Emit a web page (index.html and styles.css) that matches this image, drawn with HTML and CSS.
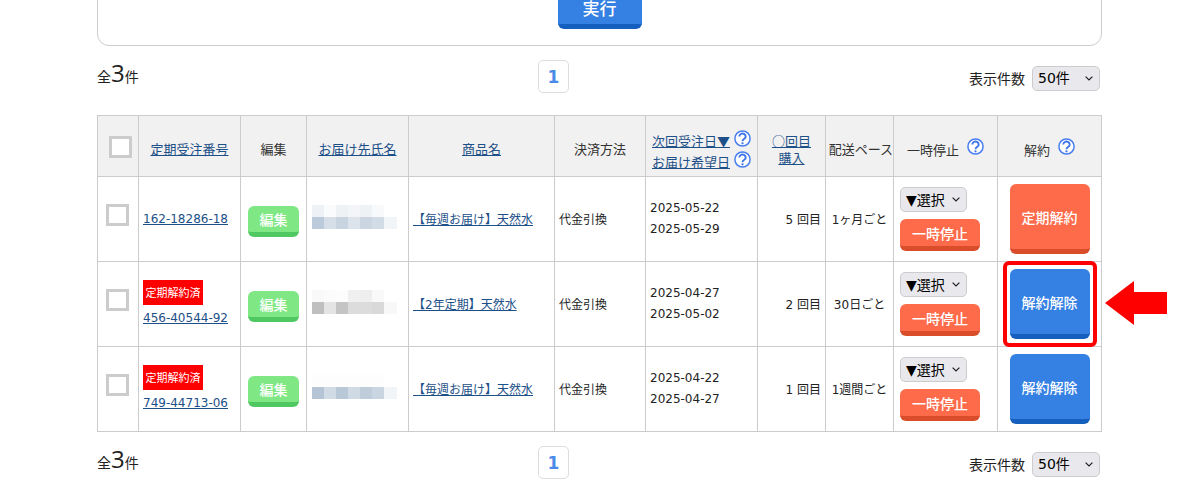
FILE: index.html
```html
<!DOCTYPE html>
<html lang="ja">
<head>
<meta charset="utf-8">
<title>定期受注一覧</title>
<link rel="stylesheet" href="styles.css">
</head>
<body>
<svg class="sprite" width="0" height="0" aria-hidden="true">
  <symbol id="help" viewBox="0 0 17 17">
    <circle cx="8.5" cy="8.5" r="7.6" fill="#fff" stroke="#4a7ff0" stroke-width="1.5"/>
    <path d="M5.3 6.5a3.2 2.9 0 1 1 5 2.3c-1.2.8-1.8 1.2-1.8 2.4" fill="none" stroke="#3f74e6" stroke-width="1.9"/>
    <circle cx="8.5" cy="13.3" r="1.15" fill="#3f74e6"/>
  </symbol>
</svg>
<main class="page">
  <section class="search-card">
    <button class="btn btn-blue btn-run" type="button">実行</button>
  </section>

  <div class="pager pager-top">
    <div class="total">全<span class="total-num">3</span>件</div>
    <a class="page-num">1</a>
    <label class="per-page">表示件数
      <select class="sel sel-count"><option>50件</option></select>
    </label>
  </div>

  <table class="orders">
    <colgroup>
      <col class="c1"><col class="c2"><col class="c3"><col class="c4"><col class="c5"><col class="c6"><col class="c7"><col class="c8"><col class="c9"><col class="c10"><col class="c11">
    </colgroup>
    <thead>
      <tr>
        <th class="th-check"><span class="check"></span></th>
        <th><a href="#">定期受注番号</a></th>
        <th>編集</th>
        <th><a href="#">お届け先氏名</a></th>
        <th><a href="#">商品名</a></th>
        <th>決済方法</th>
        <th class="th-date">
          <div class="date-head"><a href="#">次回受注日▼</a><svg class="help"><use href="#help"/></svg></div>
          <div class="date-head"><a href="#">お届け希望日</a><svg class="help"><use href="#help"/></svg></div>
        </th>
        <th class="th-times"><a href="#">○回目</a><br><a href="#">購入</a></th>
        <th class="th-pace">配送ペース</th>
        <th><span class="th-label">一時停止</span><svg class="help help-inline"><use href="#help"/></svg></th>
        <th><span class="th-label">解約</span><svg class="help help-inline"><use href="#help"/></svg></th>
      </tr>
    </thead>
    <tbody>
      <tr>
        <td class="td-check"><span class="check"></span></td>
        <td class="td-order"><a href="#">162-18286-18</a></td>
        <td class="td-edit"><button class="btn btn-green btn-edit" type="button">編集</button></td>
        <td class="td-name"><div class="blur blur-1"><div class="blur-top"></div><div class="blur-bottom"></div></div></td>
        <td class="td-item"><a href="#">【毎週お届け】天然水</a></td>
        <td class="td-pay">代金引換</td>
        <td class="td-date">2025-05-22<br>2025-05-29</td>
        <td class="td-times">5 回目</td>
        <td class="td-pace">1ヶ月ごと</td>
        <td class="td-stop">
          <select class="sel sel-action"><option>▼選択</option></select>
          <button class="btn btn-orange btn-stop" type="button">一時停止</button>
        </td>
        <td class="td-cancel"><button class="btn btn-orange btn-cancel" type="button">定期解約</button></td>
      </tr>
      <tr>
        <td class="td-check"><span class="check"></span></td>
        <td class="td-order"><span class="badge">定期解約済</span><a href="#">456-40544-92</a></td>
        <td class="td-edit"><button class="btn btn-green btn-edit" type="button">編集</button></td>
        <td class="td-name"><div class="blur blur-2"><div class="blur-top"></div><div class="blur-bottom"></div></div></td>
        <td class="td-item"><a href="#">【2年定期】天然水</a></td>
        <td class="td-pay">代金引換</td>
        <td class="td-date">2025-04-27<br>2025-05-02</td>
        <td class="td-times">2 回目</td>
        <td class="td-pace">30日ごと</td>
        <td class="td-stop">
          <select class="sel sel-action"><option>▼選択</option></select>
          <button class="btn btn-orange btn-stop" type="button">一時停止</button>
        </td>
        <td class="td-cancel td-marked">
          <button class="btn btn-blue btn-cancel" type="button">解約解除</button>
          <span class="highlight"></span>
          <svg class="arrow" width="62" height="44" viewBox="0 0 62 44" aria-hidden="true"><path d="M0 22 29 0V11H62V33H29V44Z" fill="#f00"/></svg>
        </td>
      </tr>
      <tr>
        <td class="td-check"><span class="check"></span></td>
        <td class="td-order"><span class="badge">定期解約済</span><a href="#">749-44713-06</a></td>
        <td class="td-edit"><button class="btn btn-green btn-edit" type="button">編集</button></td>
        <td class="td-name"><div class="blur blur-3"><div class="blur-top"></div><div class="blur-bottom"></div></div></td>
        <td class="td-item"><a href="#">【毎週お届け】天然水</a></td>
        <td class="td-pay">代金引換</td>
        <td class="td-date">2025-04-22<br>2025-04-27</td>
        <td class="td-times">1 回目</td>
        <td class="td-pace">1週間ごと</td>
        <td class="td-stop">
          <select class="sel sel-action"><option>▼選択</option></select>
          <button class="btn btn-orange btn-stop" type="button">一時停止</button>
        </td>
        <td class="td-cancel"><button class="btn btn-blue btn-cancel" type="button">解約解除</button></td>
      </tr>
    </tbody>
  </table>

  <div class="pager pager-bottom">
    <div class="total">全<span class="total-num">3</span>件</div>
    <a class="page-num">1</a>
    <label class="per-page">表示件数
      <select class="sel sel-count"><option>50件</option></select>
    </label>
  </div>
</main>
</body>
</html>
```
FILE: styles.css
```css
* { box-sizing: border-box; }
html, body { margin: 0; height: 480px; overflow: hidden; background: #fff; }
body {
  font-family: "DejaVu Sans", "Noto Sans CJK JP", sans-serif;
  font-size: 12px;
  color: #222;
}
a { color: #1d5088; text-decoration: underline; }
.sprite { position: absolute; }

.page { width: 1005px; margin-left: 97px; }

.search-card {
  margin-top: -21px;
  padding: 13px 0 16px;
  border: 1px solid #ccc;
  border-radius: 12px;
  text-align: center;
}

.btn {
  display: block;
  padding: 0;
  border: 0;
  border-bottom: 5px solid;
  border-radius: 6px;
  color: #fff;
  font-family: "Noto Sans CJK JP", sans-serif;
  font-size: 14px;
  font-weight: 500;
  line-height: 1;
}
.btn-blue { background: #3581e3; border-color: #1560bf; }
.btn-orange { background: #fd6b4b; border-color: #d94d2a; }
.btn-green { background: #7fe884; border-color: #50c862; }
.btn-run { width: 84px; height: 36px; margin: 0 auto; padding-bottom: 2px; font-size: 17px; }
.btn-edit { width: 51px; height: 31px; margin: 4px auto 0; }
.btn-stop { width: 80px; height: 32px; margin-top: 7px; }
.btn-cancel { width: 80px; height: 70px; margin: 0 auto; }

.pager {
  display: grid;
  grid-template-columns: 441px 31px 1fr;
  align-items: center;
  height: 33px;
}
.pager-top { margin: 14px 0 22px; }
.pager-bottom { margin-top: 14px; }
.total {
  padding-bottom: 8px;
  font-family: "Noto Sans CJK JP", sans-serif;
  font-size: 14px;
  color: #222;
  line-height: 1;
}
.total-num { font-family: "Open Sans", sans-serif; font-size: 24px; }
.page-num {
  display: flex;
  align-items: center;
  justify-content: center;
  height: 33px;
  border: 1px solid #ddd;
  border-radius: 5px;
  color: #4a8ae8;
  font-family: "DejaVu Sans", sans-serif;
  font-size: 17px;
  font-weight: 700;
  text-decoration: none;
}
.per-page {
  display: flex;
  align-items: center;
  justify-content: flex-end;
  gap: 7px;
  padding: 3px 2px 0 0;
  font-family: "Noto Sans CJK JP", sans-serif;
  font-size: 14px;
  color: #222;
}
.sel {
  display: block;
  height: 25px;
  padding: 0 0 0 5px;
  border: 1px solid #ccc;
  border-radius: 5px;
  background: #e9e9ed url("data:image/svg+xml,%3Csvg xmlns='http://www.w3.org/2000/svg' width='8' height='5' viewBox='0 0 8 5'%3E%3Cpath d='M.6.6 4 4 7.4.6' fill='none' stroke='%23222' stroke-width='1.2'/%3E%3C/svg%3E") no-repeat right 6px center;
  color: #000;
  font-family: "DejaVu Sans", "Noto Sans CJK JP", sans-serif;
  font-size: 14px;
  appearance: none;
}
.sel-count { width: 68px; }
.sel-action { width: 67px; }

.orders {
  width: 1005px;
  table-layout: fixed;
  border-collapse: collapse;
}
.c1 { width: 41px; }
.c2 { width: 102px; }
.c3 { width: 66px; }
.c4 { width: 102px; }
.c5 { width: 146px; }
.c6 { width: 91px; }
.c7 { width: 112px; }
.c8 { width: 68px; }
.c9 { width: 68px; }
.c10 { width: 104px; }
.c11 { width: 104px; }

.orders th, .orders td {
  padding: 0 4px;
  border: 1px solid #ccc;
  vertical-align: middle;
}
.orders th {
  height: 61px;
  padding-top: 5px;
  background: #f1f1f1;
  color: #333;
  font-family: "Noto Sans CJK JP", sans-serif;
  font-size: 13px;
  font-weight: 400;
  text-align: center;
  white-space: nowrap;
}
.orders td { height: 85px; font-family: "DejaVu Sans", "Noto Sans CJK JP", sans-serif; }

.check {
  display: block;
  width: 23px;
  height: 22px;
  margin: 0 auto;
  border: 3px solid #ccc;
  background: #fff;
}
.td-check .check { margin-bottom: 8px; }
.orders .th-check { padding: 1px 0 0 4px; }
.orders .td-check { padding: 0 1px 0 0; }

.orders .td-order { padding: 0 0 0 4px; line-height: 21px; }
.badge {
  display: block;
  width: 60px;
  height: 25px;
  margin: 0 0 3px;
  background: #f00;
  color: #fff;
  font-size: 11px;
  line-height: 25px;
  text-align: center;
  font-family: "Noto Sans CJK JP", sans-serif;
}

.orders .td-name { padding: 0 0 0 5px; }
.blur { width: 85px; margin: 0 0 5px; }
.blur-top, .blur-bottom { height: 12px; }
.blur-1 .blur-top { width: 72px; background: linear-gradient(90deg, #eef2f6 0 12px, #fafbfc 12px 24px, #eff2f5 24px 36px, #f3f5f8 36px 48px, #eff2f5 48px 60px, #f8f9fb 60px); }
.blur-1 .blur-bottom { background: linear-gradient(90deg, #bccbdb 0 12px, #d6dfe8 12px 24px, #c8d5e1 24px 36px, #dce3eb 36px 48px, #cbd6e2 48px 60px, #d2dce6 60px 72px, #f2f5f8 72px); }
.blur-2 .blur-top { width: 72px; background: linear-gradient(90deg, #f9f9f9 0 12px, #fbfbfb 12px 24px, #fcfcfc 24px 36px, #f0f0f0 36px 48px, #eee 48px 60px, #f9f9f9 60px); }
.blur-2 .blur-bottom { background: linear-gradient(90deg, #bfbfbf 0 12px, #e4e4e4 12px 24px, #c4c4c4 24px 36px, #dcdcdc 36px 60px, #d9d9d9 60px 72px, #f8f8f8 72px); }
.blur-3 .blur-top { width: 72px; background: #fdfdfd; }
.blur-3 .blur-bottom { background: linear-gradient(90deg, #b5c5d5 0 12px, #d0dbe5 12px 24px, #b9c8d7 24px 36px, #cfdae4 36px 48px, #bfcddb 48px 60px, #c9d5e1 60px 72px, #f1f5f8 72px); }

.orders .td-item { padding-bottom: 2px; white-space: nowrap; }
.orders .td-pay { padding-bottom: 2px; }
.orders .td-date { padding: 0 0 0 4px; line-height: 21px; }
.orders .td-times { padding: 0 4px 2px; text-align: right; }
.orders .td-pace { padding: 0 0 2px; text-align: center; white-space: nowrap; }
.orders .th-pace { padding: 5px 0 0; text-align: right; }
.orders .td-stop { padding: 0 0 0 6px; }
.orders .td-cancel { padding: 0; }

.orders .th-date { padding: 10px 0 0 6px; text-align: left; }
.date-head { display: flex; align-items: center; gap: 4px; height: 21px; line-height: 21px; }
.orders .th-times { padding-top: 5px; line-height: 17px; }
.help { display: block; width: 17px; height: 17px; margin-top: -5px; flex: none; }
.help-inline { display: inline-block; margin: 0 0 0 8px; vertical-align: 0; }

.td-marked { position: relative; }
.highlight {
  position: absolute;
  left: 5px;
  top: -1px;
  width: 94px;
  height: 86px;
  border: 4px solid #f00;
  border-radius: 6px;
}
.arrow { position: absolute; left: 107px; top: 19px; }
```
